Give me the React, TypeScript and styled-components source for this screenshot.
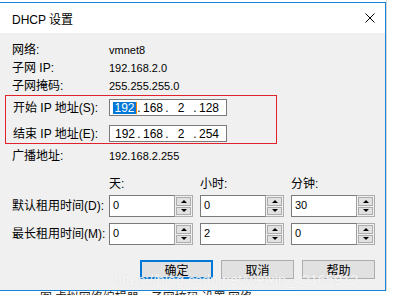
import React from 'react';
import styled, { createGlobalStyle } from 'styled-components';

const GlobalStyle = createGlobalStyle`
  html, body {
    margin: 0;
    padding: 0;
    background: #ffffff;
  }
  body {
    font-family: "Liberation Sans", "Noto Sans CJK SC", sans-serif;
    font-size: 12px;
    color: #000;
  }
`;

const Screen = styled.div`
  width: 397px;
  height: 301px;
  display: flex;
  flex-direction: column;
  overflow: hidden;
  position: relative;
  background: #fff;
`;

const Desk = styled.div`
  display: flex;
  height: 291px;
`;

const Dialog = styled.div`
  width: 386px;
  margin-top: 2px;
  display: flex;
  flex-direction: column;
  border-top: 1px solid #1883d7;
  border-right: 1px solid #1883d7;
  border-bottom: 1px solid #1883d7;
  box-sizing: border-box;
`;

const SideStrip = styled.div`
  flex: 1;
  border-left: 1px solid #d6d6d6;
  background: #fff;
`;

const TitleBar = styled.div`
  height: 30px;
  background: #fff;
  display: flex;
  align-items: center;
  justify-content: space-between;
  padding: 0 10px 0 12px;
  font-size: 12px;
`;

const Body = styled.div`
  flex: 1;
  background: #f0f0f0;
  padding: 8px 0 0;
  display: flex;
  flex-direction: column;
`;

const InfoRow = styled.div<{ $top?: number }>`
  height: 18px;
  display: grid;
  grid-template-columns: 97px 1fr;
  align-items: center;
  padding-left: 12px;
  margin-top: ${p => p.$top ?? 0}px;
`;

const Label = styled.span`
  font-family: "Liberation Sans", "Noto Sans CJK SC", sans-serif;
  font-size: 12px;
  white-space: nowrap;
  line-height: 16px;
`;

const Value = styled.span`
  font-family: "Liberation Sans", sans-serif;
  font-size: 11px;
`;

const RangeBox = styled.div`
  margin-left: 5px;
  width: 272px;
  box-sizing: border-box;
  border: 1px solid #e0222c;
  padding: 3px 0 1px 7px;
  display: grid;
  grid-template-columns: 96px 118px;
  row-gap: 9px;
  align-items: center;
`;

const IpField = styled.div`
  height: 17px;
  box-sizing: border-box;
  border: 1px solid #7a7a7a;
  background: #fff;
  display: flex;
  align-items: center;
  padding-left: 4px;
  font-family: "Liberation Sans", sans-serif;
  font-size: 12px;
`;

const Octet = styled.span`
  width: 22px;
  text-align: center;
  display: flex;
  justify-content: center;
`;

const Dot = styled.span`
  width: 6px;
  text-align: center;
`;

const Selected = styled.span`
  background: #0078d7;
  color: #fff;
  line-height: 12px;
  padding: 0 1px;
  border-right: 1px solid #f08a00;
`;

const TimeGrid = styled.div<{ $top: number }>`
  display: grid;
  grid-template-columns: 90px 84px 84px 84px;
  column-gap: 7px;
  padding-left: 12px;
  align-items: center;
  margin-top: ${p => p.$top}px;
`;

const HeaderRow = styled(TimeGrid)`
  height: 18px;
`;

const SpinRow = styled(TimeGrid)`
  height: 22px;
`;

const Spinner = styled.div`
  display: flex;
  height: 22px;
`;

const SpinInput = styled.div`
  flex: 1;
  box-sizing: border-box;
  border: 1px solid #7a7a7a;
  border-right-color: #a0a0a0;
  background: #fff;
  padding: 3px 0 0 3px;
  font-family: "Liberation Sans", sans-serif;
  font-size: 11px;
  line-height: 13px;
`;

const SpinButtons = styled.div`
  width: 18px;
  box-sizing: border-box;
  border: 1px solid #adadad;
  border-left: none;
  padding: 1px;
  display: flex;
  flex-direction: column;
  gap: 1px;
`;

const SpinButton = styled.div<{ $down?: boolean }>`
  flex: 1;
  background: #e1e1e1;
  border: 1px solid #adadad;
  display: flex;
  align-items: center;
  justify-content: center;
  &::after {
    content: "";
    width: 0;
    height: 0;
    border-left: 3px solid transparent;
    border-right: 3px solid transparent;
    ${p => (p.$down ? 'border-top: 3px solid #000;' : 'border-bottom: 3px solid #000;')}
  }
`;

const ButtonRow = styled.div`
  display: flex;
  justify-content: flex-end;
  gap: 8px;
  padding-right: 10px;
  margin-top: 15px;
`;

const Button = styled.div<{ $default?: boolean }>`
  width: 73px;
  height: 19px;
  box-sizing: border-box;
  background: #e1e1e1;
  border: ${p => (p.$default ? '2px solid #0078d7' : '1px solid #adadad')};
  display: flex;
  align-items: center;
  justify-content: center;
  font-family: "Noto Sans CJK SC", sans-serif;
  font-size: 12px;
`;

/* the window behind the dialog: only the top sliver of its text shows */
const BottomStrip = styled.div`
  height: 4px;
  overflow: hidden;
  padding-left: 40px;
  display: flex;
  gap: 12px;
  color: #222;
  font-family: "Noto Sans CJK SC", sans-serif;
  font-size: 12px;
  line-height: 12px;
`;

const ClippedText = styled.span`
  margin-top: 0;
`;

const Watermark = styled.div`
  position: absolute;
  left: 114px;
  top: 271px;
  font-family: "Liberation Sans", sans-serif;
  font-size: 15px;
  letter-spacing: -0.3px;
  color: rgba(255, 255, 255, 0.75);
  text-shadow: 0 0 1px rgba(200, 200, 200, 0.6);
  white-space: nowrap;
  pointer-events: none;
`;

const CloseIcon = () => (
  <svg width="10" height="10" viewBox="0 0 10 10">
    <path d="M0.5 0.5 L9.5 9.5 M9.5 0.5 L0.5 9.5" stroke="#000" strokeWidth="1" fill="none" />
  </svg>
);

const TimeSpinner: React.FC<{ value: string }> = ({ value }) => (
  <Spinner>
    <SpinInput>{value}</SpinInput>
    <SpinButtons>
      <SpinButton />
      <SpinButton $down />
    </SpinButtons>
  </Spinner>
);

const App: React.FC = () => {
  return (
    <>
      <GlobalStyle />
      <Screen>
        <Desk>
          <Dialog>
            <TitleBar>
              <span>DHCP 设置</span>
              <CloseIcon />
            </TitleBar>
            <Body>
              <InfoRow>
                <Label>网络:</Label>
                <Value>vmnet8</Value>
              </InfoRow>
              <InfoRow>
                <Label>子网 IP:</Label>
                <Value>192.168.2.0</Value>
              </InfoRow>
              <InfoRow>
                <Label>子网掩码:</Label>
                <Value>255.255.255.0</Value>
              </InfoRow>

              <RangeBox>
                <Label>开始 IP 地址(S):</Label>
                <IpField>
                  <Octet><Selected>192</Selected></Octet>
                  <Dot>.</Dot>
                  <Octet>168</Octet>
                  <Dot>.</Dot>
                  <Octet>2</Octet>
                  <Dot>.</Dot>
                  <Octet>128</Octet>
                </IpField>
                <Label>结束 IP 地址(E):</Label>
                <IpField>
                  <Octet>192</Octet>
                  <Dot>.</Dot>
                  <Octet>168</Octet>
                  <Dot>.</Dot>
                  <Octet>2</Octet>
                  <Dot>.</Dot>
                  <Octet>254</Octet>
                </IpField>
              </RangeBox>

              <InfoRow $top={3}>
                <Label>广播地址:</Label>
                <Value>192.168.2.255</Value>
              </InfoRow>

              <HeaderRow $top={10}>
                <span />
                <Label>天:</Label>
                <Label>小时:</Label>
                <Label>分钟:</Label>
              </HeaderRow>
              <SpinRow $top={2}>
                <Label>默认租用时间(D):</Label>
                <TimeSpinner value="0" />
                <TimeSpinner value="0" />
                <TimeSpinner value="30" />
              </SpinRow>
              <SpinRow $top={6}>
                <Label>最长租用时间(M):</Label>
                <TimeSpinner value="0" />
                <TimeSpinner value="2" />
                <TimeSpinner value="0" />
              </SpinRow>

              <ButtonRow>
                <Button $default>确定</Button>
                <Button>取消</Button>
                <Button>帮助</Button>
              </ButtonRow>
            </Body>
          </Dialog>
          <SideStrip />
        </Desk>
        <BottomStrip>
          <ClippedText>图 虚拟网络编辑器</ClippedText>
          <ClippedText>子网掩码 设置 网络</ClippedText>
        </BottomStrip>
        <Watermark>https://blog.csdn.net/weixin_42165912</Watermark>
      </Screen>
    </>
  );
};

export default App;
